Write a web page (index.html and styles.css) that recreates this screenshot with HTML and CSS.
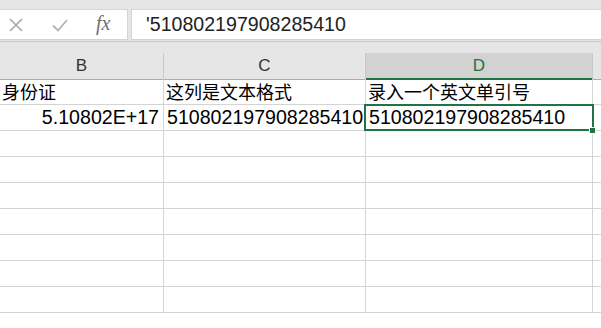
FILE: index.html
```html
<!DOCTYPE html>
<html lang="zh-CN">
<head>
    <meta charset="UTF-8">
    <title>身份证 - Excel</title>
    <link rel="stylesheet" href="styles.css">
</head>
<body>
    <!-- Formula bar -->
    <div class="toolbar">
        <div class="formula-row">
            <div class="fx-box">
                <svg class="icon" width="16" height="16" viewBox="0 0 16 16">
                    <path d="M2 2 L14 14 M14 2 L2 14" stroke="#a6a6a6" stroke-width="1.6" fill="none"/>
                </svg>
                <svg class="icon" width="18" height="16" viewBox="0 0 18 16">
                    <path d="M2 8.5 L7 13.5 L16 3" stroke="#b3b3b3" stroke-width="1.8" fill="none"/>
                </svg>
                <span class="fx">fx</span>
            </div>
            <div class="formula-input">'510802197908285410</div>
        </div>
    </div>

    <!-- Sheet -->
    <div class="sheet">
        <div class="col-head">B</div>
        <div class="col-head">C</div>
        <div class="col-head active">D</div>
        <div class="col-head last"></div>

        <div class="cell cjk">身份证</div>
        <div class="cell cjk">这列是文本格式</div>
        <div class="cell cjk">录入一个英文单引号</div>
        <div class="cell last"></div>

        <div class="cell num right">5.10802E+17</div>
        <div class="cell num">510802197908285410</div>
        <div class="cell num selected">510802197908285410</div>
        <div class="cell last"></div>

        <div class="cell"></div><div class="cell"></div><div class="cell"></div><div class="cell last"></div>
        <div class="cell"></div><div class="cell"></div><div class="cell"></div><div class="cell last"></div>
        <div class="cell"></div><div class="cell"></div><div class="cell"></div><div class="cell last"></div>
        <div class="cell"></div><div class="cell"></div><div class="cell"></div><div class="cell last"></div>
        <div class="cell"></div><div class="cell"></div><div class="cell"></div><div class="cell last"></div>
        <div class="cell"></div><div class="cell"></div><div class="cell"></div><div class="cell last"></div>
        <div class="cell"></div><div class="cell"></div><div class="cell"></div><div class="cell last"></div>
    </div>
</body>
</html>
```

FILE: styles.css
```css
body {
    margin: 0;
    background: #fff;
    font-family: "Liberation Sans", Arial, "Noto Sans CJK SC", sans-serif;
    color: #000;
    overflow: hidden;
}
.toolbar {
    background: #e6e6e6;
    height: 53px;
    padding-top: 9px;
    box-sizing: border-box;
}
.formula-row {
    display: flex;
    gap: 3px;
    height: 32px;
    border-bottom: 1px solid #c6c6c6;
}
.fx-box {
    width: 128px;
    height: 31px;
    background: #fff;
    border: 1px solid #d4d4d4;
    border-left: none;
    box-sizing: border-box;
    display: flex;
    align-items: center;
    padding-left: 8px;
}
.icon {
    display: block;
}
.fx-box .icon + .icon {
    margin-left: 27px;
}
.fx {
    font-family: "Liberation Serif", serif;
    font-style: italic;
    font-size: 20px;
    color: #6f6f6f;
    margin-left: 27px;
    margin-top: -2px;
}
.formula-input {
    flex: 1;
    height: 31px;
    background: #fff;
    border: 1px solid #d4d4d4;
    border-right: none;
    box-sizing: border-box;
    font-size: 19.6px;
    line-height: 29px;
    padding-left: 14px;
    color: #222;
}
.sheet {
    display: grid;
    grid-template-columns: 164px 202px 227px 1fr;
    grid-auto-rows: 26px;
}
.col-head {
    height: 27px;
    box-sizing: border-box;
    background: #e6e6e6;
    border-right: 1px solid #c8c8c8;
    border-bottom: 1px solid #ababab;
    text-align: center;
    font-size: 17px;
    line-height: 26px;
    color: #333;
}
.col-head.active {
    background: #d2d2d2;
    color: #217346;
    border-bottom: 2px solid #217346;
    line-height: 25px;
}
.col-head.last {
    border-right: none;
}
.cell {
    box-sizing: border-box;
    border-right: 1px solid #d4d4d4;
    border-bottom: 1px solid #d4d4d4;
    white-space: nowrap;
    padding-left: 2px;
    position: relative;
}
.cell.last {
    border-right: none;
}
.cjk {
    font-family: "Noto Sans CJK SC", sans-serif;
    font-size: 18px;
    line-height: 24px;
    padding-left: 2px;
}
.num {
    font-size: 19.6px;
    line-height: 24px;
    padding-left: 3px;
}
.right {
    text-align: right;
    padding-right: 4px;
}
.selected::after {
    content: "";
    position: absolute;
    left: -2px;
    top: -1px;
    right: -2px;
    bottom: -1px;
    border: 2px solid #217346;
}
.selected::before {
    content: "";
    position: absolute;
    right: -4px;
    bottom: -4px;
    width: 5px;
    height: 5px;
    background: #217346;
    border: 1px solid #fff;
    z-index: 1;
}
```
